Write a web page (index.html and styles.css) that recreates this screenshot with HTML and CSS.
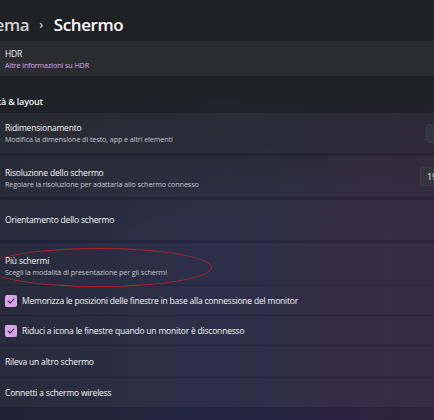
FILE: index.html
```html
<!DOCTYPE html>
<html lang="it">
<head>
<meta charset="utf-8">
<link rel="stylesheet" href="styles.css">
</head>
<body>
<div class="page">
  <h1 class="title"><span class="crumb">Sistema</span><span class="sep">›</span><span>Schermo</span></h1>

  <div class="card hdr">
    <div class="label">HDR</div>
    <div class="link">Altre informazioni su HDR</div>
  </div>

  <h2 class="section">Scalabilità &amp; layout</h2>

  <div class="list">
    <div class="card tall">
      <div class="text">
        <div class="label">Ridimensionamento</div>
        <div class="sub">Modifica la dimensione di testo, app e altri elementi</div>
      </div>
      <div class="select s1">100% (consigliato)</div>
    </div>
    <div class="card tall t2">
      <div class="text">
        <div class="label">Risoluzione dello schermo</div>
        <div class="sub">Regolare la risoluzione per adattarla allo schermo connesso</div>
      </div>
      <div class="select s2">1920 × 1080</div>
    </div>
    <div class="card tall">
      <div class="label">Orientamento dello schermo</div>
    </div>
    <div class="group">
      <div class="card tall multi">
        <div class="text">
          <div class="label">Più schermi</div>
          <div class="sub">Scegli la modalità di presentazione per gli schermi</div>
        </div>
      </div>
      <div class="card row">
        <span class="check"><svg viewBox="0 0 12 12" width="12" height="12"><path d="M3.2 6.2 L5.1 8 L8.9 4.2" fill="none" stroke="#2b1f33" stroke-width="1.1" stroke-linecap="round" stroke-linejoin="round"/></svg></span>
        <span class="label">Memorizza le posizioni delle finestre in base alla connessione del monitor</span>
      </div>
      <div class="card row">
        <span class="check"><svg viewBox="0 0 12 12" width="12" height="12"><path d="M3.2 6.2 L5.1 8 L8.9 4.2" fill="none" stroke="#2b1f33" stroke-width="1.1" stroke-linecap="round" stroke-linejoin="round"/></svg></span>
        <span class="label">Riduci a icona le finestre quando un monitor è disconnesso</span>
      </div>
      <div class="card row r3">
        <span class="label">Rileva un altro schermo</span>
      </div>
      <div class="card row">
        <span class="label">Connetti a schermo wireless</span>
      </div>
    </div>
  </div>
</div>
<div class="ellipse"></div>
</body>
</html>
```

FILE: styles.css
```css
html, body {
  margin: 0;
  padding: 0;
}
body {
  width: 434px;
  height: 420px;
  overflow: hidden;
  position: relative;
  font-family: "Open Sans", "Noto Sans", sans-serif;
  color: #ffffff;
  background:
    linear-gradient(180deg, #202124 0%, #202126 20%, rgba(32,33,38,0) 55%),
    linear-gradient(90deg, #1f2233 0%, #232640 45%, #2b2440 80%, #2f2340 100%);
}
.page {
  margin-left: -20px;
  width: 560px;
}
.title {
  margin: 0;
  height: 41px;
  box-sizing: border-box;
  padding-top: 7px;
  display: flex;
  align-items: center;
  font-size: 17px;
  font-weight: 600;
  letter-spacing: -0.4px;
}
.crumb {
  color: #d0d0d2;
  margin-left: -13px;
}
.sep {
  font-size: 12px;
  color: #c8c8cc;
  margin: 0 11px 0 10px;
}
.card {
  background: rgba(255,255,255,0.045);
  box-sizing: border-box;
  padding-left: 25px;
  display: flex;
  align-items: center;
}
.hdr {
  height: 35px;
  flex-direction: column;
  align-items: flex-start;
  justify-content: center;
  background: #2b2c30;
}
.label {
  font-size: 8.5px;
  line-height: 12px;
  letter-spacing: -0.2px;
  color: #f4f4f6;
}
.link {
  font-size: 7.2px;
  line-height: 10px;
  letter-spacing: -0.1px;
  color: #d6a8ee;
}
.sub {
  font-size: 7.2px;
  line-height: 10px;
  letter-spacing: -0.1px;
  color: #c4c4ca;
}
.section {
  margin: 0;
  height: 37px;
  box-sizing: border-box;
  padding-top: 20px;
  padding-left: 25px;
  font-size: 9px;
  font-weight: 600;
  line-height: 12px;
  letter-spacing: -0.2px;
  color: #f0f0f2;
  text-indent: -41px;
}
.list {
  display: flex;
  flex-direction: column;
  gap: 3px;
}
.group {
  display: flex;
  flex-direction: column;
  gap: 1px;
}
.tall {
  height: 40px;
  justify-content: space-between;
}
.t2 {
  height: 41px;
  padding-top: 3px;
}
.multi {
  height: 42px;
  padding-top: 4px;
}
.text {
  display: flex;
  flex-direction: column;
}
.select {
  height: 19px;
  box-sizing: border-box;
  border-radius: 3px;
  background: #34343e;
  border: 1px solid #3c3c48;
  font-size: 9px;
  line-height: 17px;
  padding: 0 6px;
  width: 90px;
  color: #ececf0;
}
.s1 { margin-right: 24px; }
.s2 { margin-right: 30px; margin-top: -3px; }
.row {
  height: 29px;
  gap: 5px;
}
.r3 { height: 31px; }
.check {
  width: 12px;
  height: 12px;
  border-radius: 2px;
  background: #d9a4ec;
  display: flex;
}
.ellipse {
  position: absolute;
  left: -14px;
  top: 248px;
  width: 226px;
  height: 39px;
  border: 1px solid #b3202c;
  border-radius: 50%;
  box-sizing: border-box;
}
```
